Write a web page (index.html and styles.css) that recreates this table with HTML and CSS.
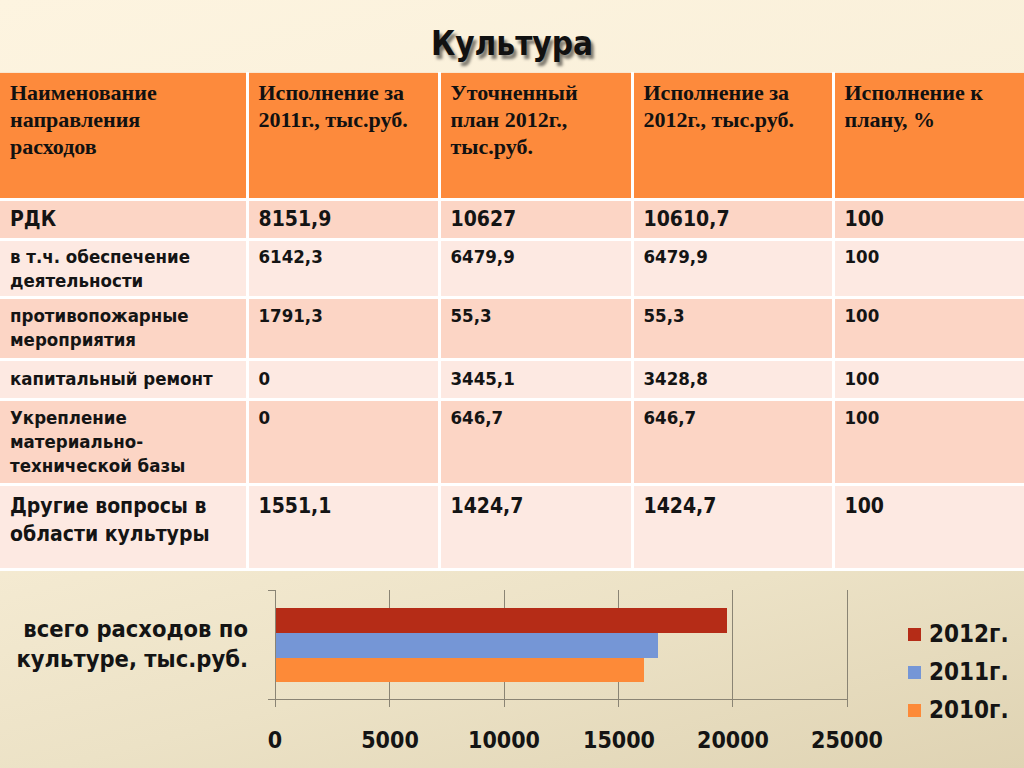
FILE: index.html
```html
<!DOCTYPE html>
<html lang="ru">
<head>
<meta charset="utf-8">
<title>Культура</title>
<link rel="stylesheet" href="styles.css">
</head>
<body>
<div class="slide">
  <h1 class="title">Культура</h1>
  <table class="budget">
    <colgroup>
      <col class="c1"><col class="c2"><col class="c3"><col class="c4"><col class="c5">
    </colgroup>
    <thead>
      <tr class="head">
        <th>Наименование<br>направления<br>расходов</th>
        <th>Исполнение за<br>2011г., тыс.руб.</th>
        <th>Уточненный<br>план 2012г.,<br>тыс.руб.</th>
        <th>Исполнение за<br>2012г., тыс.руб.</th>
        <th>Исполнение к<br>плану, %</th>
      </tr>
    </thead>
    <tbody>
      <tr class="dark big r1">
        <td>РДК</td><td class="num">8151,9</td><td class="num">10627</td><td class="num">10610,7</td><td>100</td>
      </tr>
      <tr class="light r2">
        <td>в т.ч. обеспечение деятельности</td><td class="num">6142,3</td><td class="num">6479,9</td><td class="num">6479,9</td><td>100</td>
      </tr>
      <tr class="dark r3">
        <td>противопожарные мероприятия</td><td class="num">1791,3</td><td class="num">55,3</td><td class="num">55,3</td><td>100</td>
      </tr>
      <tr class="light r4">
        <td>капитальный ремонт</td><td class="num">0</td><td class="num">3445,1</td><td class="num">3428,8</td><td>100</td>
      </tr>
      <tr class="dark r5">
        <td>Укрепление материально-технической базы</td><td class="num">0</td><td class="num">646,7</td><td class="num">646,7</td><td>100</td>
      </tr>
      <tr class="light big r6">
        <td>Другие вопросы в области культуры</td><td class="num">1551,1</td><td class="num">1424,7</td><td class="num">1424,7</td><td>100</td>
      </tr>
    </tbody>
  </table>

  <section class="chart">
    <div class="cat-label">всего расходов по культуре, тыс.руб.</div>
    <svg class="plot" width="640" height="197" viewBox="0 0 640 197" xmlns="http://www.w3.org/2000/svg">
      <g stroke="#8a8474" stroke-width="1">
        <line x1="25.5" y1="19" x2="25.5" y2="136"/>
        <line x1="139.5" y1="19" x2="139.5" y2="136"/>
        <line x1="254.5" y1="19" x2="254.5" y2="136"/>
        <line x1="368.5" y1="19" x2="368.5" y2="136"/>
        <line x1="482.5" y1="19" x2="482.5" y2="136"/>
        <line x1="597.5" y1="19" x2="597.5" y2="136"/>
        <line x1="18" y1="19.5" x2="25" y2="19.5"/>
        <line x1="18" y1="128.5" x2="597" y2="128.5"/>
      </g>
      <rect x="26" y="37" width="451" height="25" fill="#b52c17"/>
      <rect x="26" y="62" width="382" height="25" fill="#7596d6"/>
      <rect x="26" y="87" width="368" height="24" fill="#fd8a38"/>
      <g class="ticks" text-anchor="middle">
        <text x="25" y="177">0</text>
        <text x="140" y="177">5000</text>
        <text x="254" y="177">10000</text>
        <text x="369" y="177">15000</text>
        <text x="483" y="177">20000</text>
        <text x="597" y="177">25000</text>
      </g>
    </svg>
    <ul class="legend">
      <li><span class="sw red"></span>2012г.</li>
      <li><span class="sw blue"></span>2011г.</li>
      <li><span class="sw orange"></span>2010г.</li>
    </ul>
  </section>
</div>
</body>
</html>
```

FILE: styles.css
```css
html, body {
  margin: 0;
  padding: 0;
}
body {
  width: 1024px;
  height: 768px;
  overflow: hidden;
  background: linear-gradient(165deg, #fdf4e0 0%, #f8eed7 45%, #ece2c6 75%, #dfd3b3 100%);
  color: #141414;
}
.slide {
  width: 1024px;
  height: 768px;
  display: flex;
  flex-direction: column;
}
.title {
  flex: none;
  margin: 0;
  height: 72px;
  box-sizing: border-box;
  padding-top: 24px;
  text-align: center;
  font-family: "DejaVu Sans Condensed", "DejaVu Sans", sans-serif;
  font-weight: bold;
  font-size: 33px;
  line-height: 40px;
  color: #111;
  text-shadow: 3px 4px 3px rgba(0,0,0,0.5);
}
.budget {
  flex: none;
  width: 1024px;
  border-collapse: collapse;
  table-layout: fixed;
}
.c1 { width: 247px; }
.c2 { width: 192px; }
.c3 { width: 193px; }
.c4 { width: 201px; }
.c5 { width: 191px; }
.budget th, .budget td {
  border: 3px solid #fff;
  text-align: left;
  vertical-align: top;
  padding: 0 8px 0 10px;
}
.budget tr > :first-child { border-left: none; }
.budget tr > :last-child { border-right: none; }
.head th {
  background: #fd8a3c;
  height: 127px;
  box-sizing: border-box;
  font-family: "Liberation Serif", serif;
  font-weight: bold;
  font-size: 22px;
  line-height: 27px;
  padding-top: 6px;
  color: #111;
  border-top: 1px solid #fbe7d0;
}
.budget td {
  font-family: "DejaVu Sans Condensed", "DejaVu Sans", sans-serif;
  font-weight: bold;
  font-size: 18.5px;
  line-height: 24px;
  padding-top: 4px;
  box-sizing: border-box;
  color: #141414;
}
.dark td { background: #fcd5c5; }
.light td { background: #fde9e2; }
.big td { font-size: 21px; line-height: 28px; }
.r1 td { height: 40px; padding-top: 4px; }
.r2 td { height: 58px; }
.r3 td { height: 62px; padding-top: 5px; }
.r4 td { height: 40px; padding-top: 6px; }
.r5 td { height: 85px; padding-top: 5px; }
.r6 td { height: 85px; padding-top: 6px; }

.chart {
  flex: 1;
  min-height: 0;
  display: flex;
  align-items: flex-start;
}
.cat-label {
  width: 250px;
  box-sizing: border-box;
  padding: 43px 2px 0 0;
  text-align: right;
  font-family: "DejaVu Sans Condensed", "DejaVu Sans", sans-serif;
  font-weight: bold;
  font-size: 23.5px;
  line-height: 30px;
  color: #141414;
}
.plot {
  display: block;
  flex: none;
}
.ticks text {
  font-family: "DejaVu Sans Condensed", "DejaVu Sans", sans-serif;
  font-weight: bold;
  font-size: 23px;
  fill: #141414;
}
.legend {
  list-style: none;
  margin: 0;
  padding: 44px 0 0 18px;
  font-family: "DejaVu Sans Condensed", "DejaVu Sans", sans-serif;
  font-weight: bold;
  font-size: 24px;
  line-height: 38px;
  color: #141414;
}
.legend li {
  display: flex;
  align-items: center;
  gap: 8px;
}
.sw {
  display: inline-block;
  width: 13px;
  height: 13px;
}
.sw.red { background: #b52c17; }
.sw.blue { background: #7596d6; }
.sw.orange { background: #fd8a38; }
```
